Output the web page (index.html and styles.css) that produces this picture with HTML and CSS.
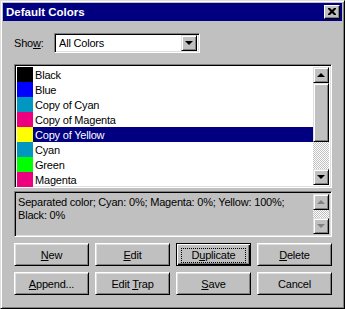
FILE: index.html
```html
<!DOCTYPE html>
<html>
    <head>
        <title>Default Colors</title>
        <link rel="stylesheet" href="styles.css">
    </head>
    <body>
        <div class="window">
            <div class="titlebar">
                <span class="title">Default Colors</span>
                <span class="close-btn">
                    <svg width="8" height="7" viewBox="0 0 8 7"><path d="M0 0h2l2 2 2-2h2v1l-2.5 2.5L8 6v1H6L4 5 2 7H0V6l2.5-2.5L0 1z" fill="#000"/></svg>
                </span>
            </div>
            <div class="content">
                <div class="show-row">
                    <label class="show-label">Sho<u>w</u>:</label>
                    <div class="combo">
                        <span class="combo-text">All Colors</span>
                        <span class="combo-btn"><i class="arrow-down"></i></span>
                    </div>
                </div>

                <div class="listbox">
                    <div class="rows">
                        <div class="row"><span class="swatch" style="background:#000000"></span>Black</div>
                        <div class="row"><span class="swatch" style="background:#0000ff"></span>Blue</div>
                        <div class="row"><span class="swatch" style="background:#0098c0"></span>Copy of Cyan</div>
                        <div class="row"><span class="swatch" style="background:#ec0080"></span>Copy of Magenta</div>
                        <div class="row selected"><span class="swatch" style="background:#ffff00"></span>Copy of Yellow</div>
                        <div class="row"><span class="swatch" style="background:#0098c0"></span>Cyan</div>
                        <div class="row"><span class="swatch" style="background:#00ff00"></span>Green</div>
                        <div class="row"><span class="swatch" style="background:#ec0080"></span>Magenta</div>
                    </div>
                    <div class="vscroll">
                        <span class="sb-btn"><i class="arrow-up"></i></span>
                        <span class="sb-thumb"></span>
                        <span class="sb-track"></span>
                        <span class="sb-btn"><i class="arrow-down"></i></span>
                    </div>
                </div>

                <div class="desc">
                    <div class="desc-text">Separated color; Cyan: 0%; Magenta: 0%; Yellow: 100%;<br>Black: 0%</div>
                    <div class="vscroll">
                        <span class="sb-btn"><i class="arrow-up off"></i></span>
                        <span class="sb-track"></span>
                        <span class="sb-btn"><i class="arrow-down off"></i></span>
                    </div>
                </div>

                <div class="buttons">
                    <button type="button"><u>N</u>ew</button>
                    <button type="button"><u>E</u>dit</button>
                    <button type="button" class="default"><span class="focus">D<u>u</u>plicate</span></button>
                    <button type="button"><u>D</u>elete</button>
                    <button type="button"><u>A</u>ppend...</button>
                    <button type="button">Edit <u>T</u>rap</button>
                    <button type="button"><u>S</u>ave</button>
                    <button type="button">Cancel</button>
                </div>
            </div>
        </div>
    </body>
</html>
```

FILE: styles.css
```css
body {
    margin: 0;
    font-family: "Liberation Sans", Arial, sans-serif;
    font-size: 11px;
    letter-spacing: -0.2px;
    color: #000;
    background: #c0c0c0;
}
.window {
    width: 345px;
    height: 309px;
    box-sizing: border-box;
    background: #c0c0c0;
    border: 1px solid;
    border-color: #dfdfdf #000 #000 #dfdfdf;
    box-shadow: inset 1px 1px #fff, inset -1px -1px #808080;
    padding: 2px;
}
.titlebar {
    height: 18px;
    background: #000080;
    display: flex;
    align-items: center;
    justify-content: space-between;
    padding: 0 2px 0 3px;
}
.title {
    color: #fff;
    font-weight: bold;
    font-size: 11.5px;
    letter-spacing: 0;
}
.close-btn {
    width: 16px;
    height: 14px;
    box-sizing: border-box;
    background: #c0c0c0;
    border: 1px solid;
    border-color: #fff #000 #000 #fff;
    box-shadow: inset -1px -1px #808080;
    display: flex;
    align-items: center;
    justify-content: center;
    padding: 0 1px 1px 0;
}
.content {
    padding: 12px 10px 0 11px;
}

/* sunken field */
.combo, .listbox, .desc {
    box-sizing: border-box;
    border: 1px solid;
    border-color: #808080 #fff #fff #808080;
    box-shadow: inset 1px 1px #000, inset -1px -1px #dfdfdf;
}
.show-row {
    display: flex;
    align-items: center;
    height: 20px;
}
.show-label {
    width: 40px;
}
.combo {
    width: 146px;
    height: 20px;
    background: #fff;
    display: flex;
    align-items: center;
    justify-content: space-between;
    padding: 2px;
}
.combo-text {
    padding-left: 2px;
}
.combo-btn, .sb-btn {
    width: 16px;
    height: 16px;
    box-sizing: border-box;
    background: #c0c0c0;
    border: 1px solid;
    border-color: #dfdfdf #000 #000 #dfdfdf;
    box-shadow: inset 1px 1px #fff, inset -1px -1px #808080;
    display: flex;
    align-items: center;
    justify-content: center;
    flex-shrink: 0;
}
.arrow-down, .arrow-up {
    width: 0;
    height: 0;
    border-left: 4px solid transparent;
    border-right: 4px solid transparent;
}
.arrow-down {
    border-top: 4px solid #000;
}
.arrow-up {
    border-bottom: 4px solid #000;
}
.arrow-up.off {
    border-bottom-color: #808080;
}
.arrow-down.off {
    border-top-color: #808080;
}

.listbox {
    margin-top: 11px;
    height: 124px;
    background: #fff;
    display: flex;
    padding: 2px;
}
.rows {
    flex: 1;
}
.row {
    height: 15px;
    display: flex;
    align-items: center;
}
.row.selected {
    background: #000080;
    color: #fff;
}
.swatch {
    width: 16px;
    height: 15px;
    margin-right: 2px;
}
.vscroll {
    width: 16px;
    display: flex;
    flex-direction: column;
}
.sb-thumb {
    height: 59px;
    box-sizing: border-box;
    background: #c0c0c0;
    border: 1px solid;
    border-color: #dfdfdf #000 #000 #dfdfdf;
    box-shadow: inset 1px 1px #fff, inset -1px -1px #808080;
}
.sb-track {
    flex: 1;
    background: repeating-conic-gradient(#c0c0c0 0 25%, #fff 0 50%) 0 0 / 2px 2px;
}

.desc {
    margin-top: 3px;
    height: 46px;
    display: flex;
    padding: 2px;
}
.desc-text {
    flex: 1;
    line-height: 13px;
    padding: 2px 0 0 1px;
}

.buttons {
    margin-top: 6px;
    display: grid;
    grid-template-columns: repeat(4, 75px);
    gap: 6px;
}
button {
    height: 23px;
    font-family: inherit;
    font-size: 11px;
    letter-spacing: inherit;
    color: #000;
    background: #c0c0c0;
    border: 1px solid;
    border-color: #fff #000 #000 #fff;
    box-shadow: inset 1px 1px #dfdfdf, inset -1px -1px #808080;
    padding: 0;
}
button.default {
    border: 1px solid #000;
    box-shadow: inset 1px 1px #fff, inset -1px -1px #000, inset -2px -2px #808080;
}
.focus {
    outline: 1px dotted #000;
    padding: 0 9px 1px 9px;
}
```
